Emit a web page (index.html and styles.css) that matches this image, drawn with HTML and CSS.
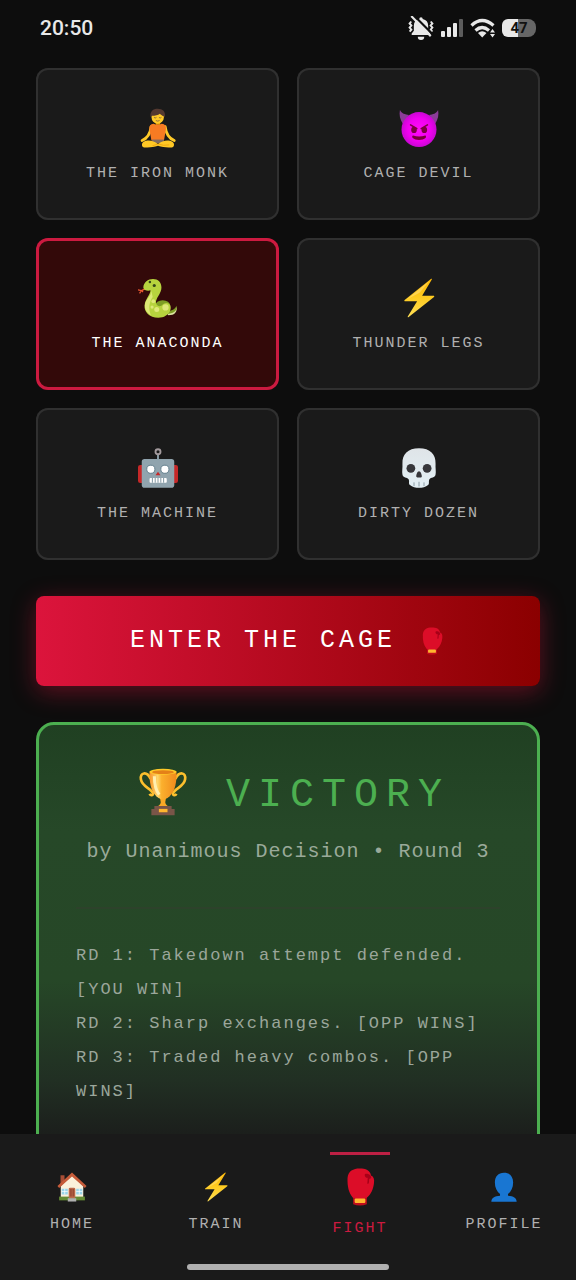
FILE: index.html
```html
<!DOCTYPE html>
<html lang="en">
<head>
<meta charset="utf-8">
<meta name="viewport" content="width=device-width, initial-scale=1">
<title>Fight</title>
<link rel="stylesheet" href="styles.css">
</head>
<body>
<svg class="sprite" aria-hidden="true">
  <defs>
    <linearGradient id="bolt-fill" x1="0" y1="0" x2="0" y2="1"><stop offset="0" stop-color="#feb804"/><stop offset=".5" stop-color="#fecb21"/><stop offset="1" stop-color="#ffdf55"/></linearGradient>
    <linearGradient id="cup-fill" x1="0" y1="0" x2="1" y2="0"><stop offset="0" stop-color="#f79329"/><stop offset=".3" stop-color="#ffd66b"/><stop offset=".45" stop-color="#fbb02d"/><stop offset="1" stop-color="#f08a1c"/></linearGradient>
    <radialGradient id="devil-fill"><stop offset="0" stop-color="#ff0cf8"/><stop offset=".65" stop-color="#f000f0"/><stop offset="1" stop-color="#c907d2"/></radialGradient>
    <linearGradient id="skull-fill" x1="0" y1="0" x2="0" y2="1"><stop offset="0" stop-color="#dfe4e8"/><stop offset="1" stop-color="#e3f0f5"/></linearGradient>
  </defs>
  <symbol id="bolt" viewBox="0 0 128 128">
    <path d="M102 3 18 70c-2 2-1 4 2 4h38L28 123c-1 2 1 4 3 2l81-64c2-2 1-4-2-4H74l31-52c1-2-1-4-3-2Z" fill="url(#bolt-fill)"/>
    <path d="M99 8 24 69l42-22Z" fill="#ffe38a" opacity=".5"/>
  </symbol>
  <symbol id="glove" viewBox="0 0 128 128">
    <path d="M41 96h46v26q-23 9-46 0Z" fill="#c00d1c"/>
    <path d="M40 100C26 84 21 62 22 34 24 10 42 2 62 2c22 0 36 6 39 23 9 4 12 12 10 26-2 19-9 36-24 49Q64 107 40 100Z" fill="#dc0d28"/>
    <path d="M80 25c-2-8 14-6 19 0 6 7 1 12-4 11l-1 14c-2 7-7 3-5-2l1-15c-5 1-9-3-10-8Z" fill="#a80018"/>
    <rect x="46" y="103" width="36" height="15" rx="4" fill="#ffb52e"/>
  </symbol>
</svg>

<div class="app">
  <header class="status">
    <time class="status-time">20:50</time>
    <div class="status-icons">
      <svg width="26" height="24" viewBox="0 0 24 22" aria-label="Silent" role="img">
        <path d="M12 1a1.600 1.600 0 0 1 1.600 1.600c3.400.8 5 3 5 6V13.500l2 2.500v1.500H3.400V16l2-2.500V8.600c0-3 1.700-5.200 5-6A1.600 1.600 0 0 1 12 1Z" fill="#e8e8e8"/>
        <path d="M9 19h6a3 3 0 0 1-6 0Z" fill="#e8e8e8"/>
        <path d="M3 5 1.500 6.800l1.600 1.900-1.600 1.900 1.600 1.900-1.600 1.900M21 5l1.500 1.800-1.600 1.900 1.600 1.900-1.600 1.900 1.600 1.900" fill="none" stroke="#e8e8e8" stroke-width="1.800"/>
        <path d="m5 -1 18 18" stroke="#0d0d0d" stroke-width="2"/>
        <path d="m3 0 18 18.500" stroke="#e8e8e8" stroke-width="2"/>
      </svg>
      <svg width="24" height="20" viewBox="0 0 24 20" aria-label="Signal" role="img">
        <g fill="#e8e8e8"><rect x="1" y="13" width="4" height="6" rx="1"/><rect x="7" y="9" width="4" height="10" rx="1"/><rect x="13" y="5" width="4" height="14" rx="1"/></g>
        <rect x="19" y="1" width="4" height="18" rx="1" fill="#5c5c5c"/>
      </svg>
      <svg width="26" height="20" viewBox="0 0 26 20" aria-label="Wi-Fi" role="img">
        <g fill="none" stroke="#e8e8e8" stroke-width="3.200"><path d="M1.500 7.500Q12 -2.500 23.500 7.500"/><path d="M5.500 12.500q6.500-6 13.500 0"/></g>
        <path d="M8 15q4-3.500 8.500 0l-4.300 4.500Z" fill="#e8e8e8"/>
        <path d="m22.500 11 2.500 3.500h-5Zm0 8.500 2.500-3.500h-5Z" fill="#e8e8e8"/>
      </svg>
      <span class="battery">47</span>
    </div>
  </header>

  <main class="content">
    <div class="fighters">
      <button class="fighter" type="button">
        <svg class="fighter-icon" viewBox="0 0 128 128" aria-hidden="true">
          <path d="M57 40h14v14H57Z" fill="#e59600"/>
          <ellipse cx="63" cy="29" rx="20" ry="21" fill="#ffca28"/>
          <path d="M40 29C38 10 48 2 63 2c16 0 26 9 23 27l-4-3c-6-2-9-5-12-8-6 5-15 6-25 7Z" fill="#543930"/>
          <path d="M51 30q4 4 8 0m8 0q4 4 8 0M57 40q6 4 12 0" fill="none" stroke="#795548" stroke-width="2.500"/>
          <path d="M42 60c-3 25-12 37-29 44m74-44c3 25 12 37 29 44" fill="none" stroke="#ffca28" stroke-width="9" stroke-linecap="round"/>
          <path d="M50 50q13 7 26 0c11 1 15 8 13 20l-6 34H43l-6-34c-2-12 2-19 13-20Z" fill="#f77b22"/>
          <path d="M45 101h38v11H45Z" fill="#806b60"/>
          <path d="M17 109c16-9 32-4 47 6 15-10 31-15 47-6 7 6 5 17-3 17-15 1-30 0-44-5-14 5-29 6-44 5-8 0-10-11-3-17Z" fill="#ffc825"/>
          <path d="M64 115q17 7 36 3M64 115l-18 6" stroke="#e59600" stroke-width="2" fill="none"/>
        </svg>
        <span>THE IRON MONK</span>
      </button>
      <button class="fighter" type="button">
        <svg class="fighter-icon" viewBox="0 0 128 128" aria-hidden="true">
          <path d="M3 6c6 13 16 13 29 16L12 50C3 36 0 20 3 6ZM125 6c-6 13-16 13-29 16l20 28c9-14 12-30 9-44Z" fill="#8b3c98"/>
          <circle cx="64" cy="69" r="56" fill="url(#devil-fill)"/>
          <path d="m37 54 20 12m34-12L71 66" stroke="#7b0040" stroke-width="5" stroke-linecap="round"/>
          <ellipse cx="48" cy="70" rx="9" ry="10" fill="#7b0040"/><ellipse cx="81" cy="70" rx="9" ry="10" fill="#7b0040"/>
          <path d="M45 88q19 6 39 0c3 0 3 5 1 8-9 8-33 8-41 0-3-3-2-8 1-8Z" fill="#780038"/>
        </svg>
        <span>CAGE DEVIL</span>
      </button>
      <button class="fighter fighter-selected" type="button" aria-pressed="true">
        <svg class="fighter-icon" viewBox="0 0 128 128" aria-hidden="true">
          <path d="m23 35-12 5-11-2m11 2-6 9m6-9 5 5" fill="none" stroke="#f05a32" stroke-width="4"/>
          <path d="M92 112c19-1 29-8 31-21 4 17-5 28-26 28Z" fill="#dbe3a0"/>
          <path d="M92 107c16-1 27-7 31-18 3 15-6 24-28 26Z" fill="#7e9e25"/>
          <ellipse cx="79" cy="88" rx="24" ry="17" fill="#7e9e25"/>
          <path d="M48 3c16 0 27 11 27 27 0 17-14 30-17 43-2 9 3 17 11 17 9 0 11-10 22-10 12 0 17 13 12 24-6 15-20 23-38 23-29 0-46-19-44-39 2-21 19-36 19-49-8 4-22 0-23-9C18 13 32 3 48 3Z" fill="#b7d33e"/>
          <path d="M42 38c3 20-20 29-20 50 0 15 9 25 19 31-8-22-6-40 6-58Z" fill="#dce775"/>
          <g fill="#dfe87a"><circle cx="49" cy="74" r="6"/><circle cx="60" cy="101" r="8"/><circle cx="88" cy="94" r="10"/><circle cx="45" cy="93" r="5"/></g>
          <circle cx="38" cy="13" r="4" fill="#34451a"/><circle cx="52" cy="24" r="5" fill="#34451a"/>
        </svg>
        <span>THE ANACONDA</span>
      </button>
      <button class="fighter" type="button">
        <svg class="fighter-icon" aria-hidden="true"><use href="#bolt"/></svg>
        <span>THUNDER LEGS</span>
      </button>
      <button class="fighter" type="button">
        <svg class="fighter-icon" viewBox="0 0 128 128" aria-hidden="true">
          <path d="M64 18v22" stroke="#90a4ae" stroke-width="6"/><circle cx="64" cy="12" r="8" fill="none" stroke="#a39a9d" stroke-width="6"/>
          <rect y="54" width="26" height="58" rx="7" fill="#c62828"/><rect x="102" y="54" width="26" height="58" rx="7" fill="#c62828"/>
          <rect x="12" y="35" width="104" height="92" rx="9" fill="#90a4ae"/>
          <circle cx="41" cy="68" r="13" fill="#fff" stroke="#607d8b" stroke-width="3"/><circle cx="86" cy="68" r="13" fill="#fff" stroke="#607d8b" stroke-width="3"/>
          <path d="m64 76-8 11h16Z" fill="#c62828"/>
          <rect x="37" y="96" width="55" height="15" rx="3" fill="#fff"/>
          <path d="M46 96v15m9-15v15m9-15v15m9-15v15m9-15v15" stroke="#78909c" stroke-width="3"/>
        </svg>
        <span>THE MACHINE</span>
      </button>
      <button class="fighter" type="button">
        <svg class="fighter-icon" viewBox="0 0 128 128" aria-hidden="true">
          <path d="M64 1c36 0 54 20 53 49-1 14 2 24 0 35-2 12-15 9-19 14-5 7 1 15-5 19-7 7-19 9-29 9s-22-2-29-9c-6-4 0-12-5-19-4-5-17-2-19-14-2-11 1-21 0-35C10 21 28 1 64 1Z" fill="url(#skull-fill)"/>
          <circle cx="38" cy="65" r="14" fill="#37373b"/><circle cx="90" cy="65" r="14" fill="#37373b"/>
          <path d="M64 74c5 0 9 10 9 17 0 5-16 5-18 0 0-7 4-17 9-17Z" fill="#37373b"/>
          <path d="M48 110v12m16-14v15m16-13v12" stroke="#8797a0" stroke-width="3"/>
        </svg>
        <span>DIRTY DOZEN</span>
      </button>
    </div>

    <button class="enter" type="button">
      <span>ENTER THE CAGE</span>
      <svg class="enter-icon" aria-hidden="true"><use href="#glove"/></svg>
    </button>

    <section class="result">
      <h1 class="result-title">
        <svg class="result-icon" viewBox="0 0 128 128" aria-hidden="true">
          <path d="M31 29C21 7 2 12 5 30c3 20 27 24 32 37 2 7-6 7-9 2M97 29c10-22 29-17 26 1-3 20-27 24-32 37-2 7 6 7 9 2" fill="none" stroke="#fbbf2d" stroke-width="7"/>
          <path d="m55 74 18 0-3 17c1 9 12 12 14 18H44c2-6 13-9 14-18Z" fill="#f9a825"/>
          <path d="M28 10q36-13 72 0c1 34-6 58-24 70q-12 7-24 0C34 68 27 44 28 10Z" fill="url(#cup-fill)"/>
          <ellipse cx="64" cy="10" rx="36" ry="8" fill="#ffca28"/><ellipse cx="64" cy="11" rx="29" ry="5" fill="#e48118"/>
          <path d="M41 22c0 22 4 38 13 49" stroke="#ffefb0" stroke-width="8" fill="none"/>
          <path d="M41 101h46v8h8v17H33v-17h8Z" fill="#795548"/><rect x="53" y="109" width="23" height="9" fill="#ffb62e"/>
        </svg>
        <span>VICTORY</span>
      </h1>
      <p class="result-method">by Unanimous Decision • Round 3</p>
      <div class="log">
        <p>RD 1: Takedown attempt defended. [YOU WIN]</p>
        <p>RD 2: Sharp exchanges. [OPP WINS]</p>
        <p>RD 3: Traded heavy combos. [OPP WINS]</p>
      </div>
    </section>
  </main>

  <footer class="dock">
    <nav class="tabs">
      <a class="tab" href="#home">
        <svg class="tab-icon" viewBox="0 0 128 128" aria-hidden="true">
          <path d="M15 14h17v42H15Z" fill="#a84e36"/>
          <path d="M64 15 16 60v55h96V60Z" fill="#faf1dc"/>
          <path d="M9 105h110v16H9Z" fill="#648b35"/>
          <path d="M20 71h26v25H20Zm62 0h26v25H82Z" fill="#9ad5e9"/><path d="M33 71v25M20 83h26m49-12v25M82 83h26" stroke="#fff" stroke-width="3"/>
          <rect x="50" y="67" width="28" height="46" rx="6" fill="#bd6b4c"/><path d="M56 73h7v32h-7Zm10 0h7v32h-7Z" fill="#9c4b36"/>
          <path d="M46 112h36v14H46Z" fill="#b0b0b0"/>
          <path d="M64 2 2 60l7 8 55-49 55 49 7-8Z" fill="#c75c3a"/>
        </svg>
        <span>HOME</span>
      </a>
      <a class="tab" href="#train">
        <svg class="tab-icon" aria-hidden="true"><use href="#bolt"/></svg>
        <span>TRAIN</span>
      </a>
      <a class="tab tab-active" href="#fight" aria-current="page">
        <svg class="tab-icon" aria-hidden="true"><use href="#glove"/></svg>
        <span>FIGHT</span>
      </a>
      <a class="tab" href="#profile">
        <svg class="tab-icon" viewBox="0 0 128 128" aria-hidden="true">
          <path d="M64 3c25 0 39 16 39 42 0 22-9 39-22 49v7c23 2 37 9 37 26H10c0-17 14-24 37-26v-7C34 84 25 67 25 45 25 19 39 3 64 3Z" fill="#1976d2"/>
        </svg>
        <span>PROFILE</span>
      </a>
    </nav>
    <div class="home-indicator"></div>
  </footer>
</div>
</body>
</html>
```

FILE: styles.css
```css
* {
  box-sizing: border-box;
}

body {
  margin: 0;
  background: #0d0d0d;
  color: #b0b0b0;
  font-family: "Liberation Mono", "Courier New", monospace;
}

button {
  border: 0;
  font-family: inherit;
  cursor: pointer;
}

.sprite {
  position: absolute;
  width: 0;
  height: 0;
}

.app {
  display: flex;
  flex-direction: column;
  height: 100vh;
}

.status {
  flex: none;
  display: flex;
  align-items: center;
  justify-content: space-between;
  height: 56px;
  padding: 0 40px;
  color: #e8e8e8;
  font-family: Roboto, sans-serif;
}

.status-time {
  font-size: 21px;
  font-weight: 500;
}

.status-icons {
  display: flex;
  align-items: center;
  gap: 6px;
}

.battery {
  width: 34px;
  height: 18px;
  border-radius: 6px 8px 8px 6px;
  background: linear-gradient(90deg, #e8e8e8 47%, #666 47%);
  color: #111;
  font-size: 15px;
  font-weight: 700;
  line-height: 18px;
  text-align: center;
}

.content {
  flex: 1;
  min-height: 0;
  overflow: hidden;
  display: flex;
  flex-direction: column;
  gap: 36px;
  padding: 12px 36px 0;
}

.fighters {
  display: grid;
  grid-template-columns: 1fr 1fr;
  gap: 18px;
}

.fighter {
  display: flex;
  flex-direction: column;
  align-items: center;
  gap: 16px;
  padding: 40px 8px 36px;
  border-radius: 12px;
  background: #1a1a1a;
  box-shadow: inset 0 0 0 2px #303030;
  color: #b0b0b0;
  font-size: 15px;
  line-height: 20px;
  letter-spacing: 2px;
}

.fighter-selected {
  background: #330909;
  box-shadow: inset 0 0 0 3px #cc1a40;
  color: #fff;
}

.fighter-icon {
  width: 40px;
  height: 40px;
}

.enter {
  flex: none;
  display: flex;
  align-items: center;
  justify-content: center;
  gap: 22px;
  padding: 30px 16px;
  border-radius: 8px;
  background: linear-gradient(90deg, #dc143c, #8b0000);
  box-shadow: 0 6px 24px rgba(220, 20, 60, 0.4);
  color: #fff;
  font-size: 25px;
  line-height: 30px;
  letter-spacing: 4px;
}

.enter-icon {
  width: 28px;
  height: 28px;
}

.result {
  flex: none;
  padding: 43px 37px 40px;
  border: 3px solid #4caf50;
  border-radius: 18px;
  background: linear-gradient(#204022, #264828 25%, #264727 60%, #212f23 84%, #1a1a1a);
}

.result-title {
  display: flex;
  align-items: flex-start;
  justify-content: center;
  gap: 38px;
  margin: 0;
  padding-left: 12px;
  color: #4caf50;
  font-size: 40px;
  font-weight: 400;
  line-height: 56px;
  letter-spacing: 8px;
}

.result-icon {
  width: 50px;
  height: 48px;
}

.result-method {
  margin: 15px 0 42px;
  color: #9aaa9a;
  font-size: 20px;
  line-height: 26px;
  letter-spacing: 1px;
  text-align: center;
}

.log {
  padding-top: 30px;
  border-top: 2px solid #2d422b;
  color: #9ba69b;
  font-size: 17px;
  line-height: 34px;
  letter-spacing: 2px;
}

.log p {
  margin: 0;
}

.dock {
  flex: none;
  padding: 18px 0 10px;
  background: #1a1a1a;
}

.tabs {
  display: grid;
  grid-template-columns: repeat(4, 1fr);
}

.tab {
  display: flex;
  flex-direction: column;
  align-items: center;
  gap: 13px;
  padding-top: 20px;
  color: #b0b0b0;
  font-size: 15px;
  line-height: 20px;
  letter-spacing: 2px;
  text-decoration: none;
}

.tab-icon {
  width: 30px;
  height: 30px;
}

.tab-active {
  padding-top: 16px;
  background: linear-gradient(#bd2044, #bd2044) top center / 60px 3px no-repeat;
  color: #cc1a40;
}

.tab-active .tab-icon {
  width: 38px;
  height: 38px;
}

.home-indicator {
  width: 35%;
  height: 6px;
  margin: 25px auto 0;
  border-radius: 3px;
  background: #b0b0b0;
}
```
